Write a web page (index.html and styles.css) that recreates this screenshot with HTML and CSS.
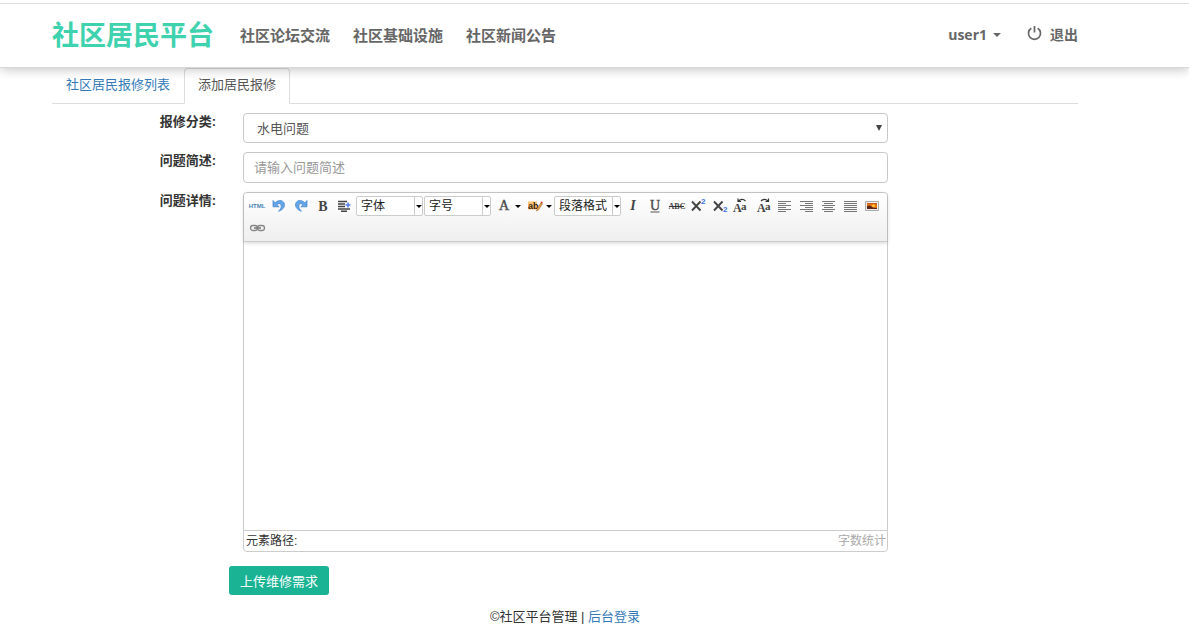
FILE: index.html
```html
<!DOCTYPE html>
<html lang="zh-CN">
<head>
<meta charset="utf-8">
<title>社区居民平台</title>
<link rel="stylesheet" href="styles.css">
</head>
<body>
<header class="navbar">
  <div class="container navbar-inner">
    <a class="brand" href="#">社区居民平台</a>
    <nav class="nav-links">
      <a href="#">社区论坛交流</a>
      <a href="#">社区基础设施</a>
      <a href="#">社区新闻公告</a>
    </nav>
    <nav class="nav-user">
      <a href="#">user1<span class="caret"></span></a>
      <a href="#" class="logout"><svg class="power" viewBox="0 0 15 16"><path d="M4.300 3.200A6 6 0 1 0 10.700 3.200M7.500 1v6.500" fill="none" stroke="currentColor" stroke-width="1.700"/></svg>退出</a>
    </nav>
  </div>
</header>
<main class="container">
  <nav class="tabs">
    <a class="tab" href="#">社区居民报修列表</a>
    <a class="tab active" href="#">添加居民报修</a>
  </nav>
  <form>
    <div class="form-row">
      <label for="category">报修分类:</label>
      <div class="select-box"><select id="category" class="control"><option>水电问题</option></select></div>
    </div>
    <div class="form-row">
      <label for="summary">问题简述:</label>
      <input id="summary" class="control text-control" type="text" placeholder="请输入问题简述">
    </div>
    <div class="form-row">
      <label for="detail">问题详情:</label>
      <div class="editor">
        <div class="toolbar">
          <button type="button" class="tool" aria-label="源代码"><svg class="icon" viewBox="0 0 18 16"><text x="9" y="10" text-anchor="middle" class="t-html">HTML</text></svg></button>
          <button type="button" class="tool" aria-label="撤销"><svg class="icon" viewBox="0 0 18 16"><path d="M3 2.500v6.300h6.200L7 6.700C8.600 5 11.200 5.300 11.200 8c0 2-.9 3.500-2.700 5.300 4-1.300 6-3.600 6-6.500C14.500 2.500 9 .7 5.200 4.800z" fill="#63a5e6" stroke="#3d83cb" stroke-width=".7"/></svg></button>
          <button type="button" class="tool" aria-label="重做"><svg class="icon" viewBox="0 0 18 16"><path d="M15 2.500v6.300H8.800L11 6.700C9.400 5 6.800 5.300 6.800 8c0 2 .9 3.500 2.700 5.300-4-1.300-6-3.600-6-6.500C3.500 2.500 9 .7 12.800 4.800z" fill="#63a5e6" stroke="#3d83cb" stroke-width=".7"/></svg></button>
          <button type="button" class="tool" aria-label="加粗"><svg class="icon" viewBox="0 0 18 16"><text x="9" y="13" text-anchor="middle" class="t-serif t-bold">B</text></svg></button>
          <button type="button" class="tool" aria-label="首行缩进"><svg class="icon" viewBox="0 0 18 16"><path d="M2 3.500h9M2 6h7M2 8.500h7M2 11h12M5 13.200h6" stroke="#444" stroke-width="1.500"/><path d="M9.500 7h5M12 4.500v5" stroke="#5582ee" stroke-width="1.600"/></svg></button>
          <span class="combo"><select aria-label="字体"><option>字体</option></select></span>
          <span class="combo"><select aria-label="字号"><option>字号</option></select></span>
          <button type="button" class="tool split" aria-label="字体颜色"><svg class="icon" viewBox="0 0 18 16"><text x="9" y="12" text-anchor="middle" class="t-serif t-color">A</text></svg></button>
          <button type="button" class="tool split" aria-label="背景色"><svg class="icon" viewBox="0 0 18 16"><path d="M2 3.500h9v8H2z" fill="#ffc477"/><text x="2" y="11" class="t-ab">ab</text><path d="M10.500 13l.8-2.500 3.500-5.500 1.500 1-3.500 5.500z" fill="#efa33c" stroke="#996238" stroke-width=".6"/><path d="M14.500 4.500l1.800 1.300.7-1-1.800-1.500z" fill="#dc4235"/></svg></button>
          <span class="combo"><select aria-label="段落格式"><option>段落格式</option></select></span>
          <button type="button" class="tool" aria-label="斜体"><svg class="icon" viewBox="0 0 18 16"><text x="9" y="12" text-anchor="middle" class="t-serif t-bold t-italic">I</text></svg></button>
          <button type="button" class="tool" aria-label="下划线"><svg class="icon" viewBox="0 0 18 16"><text x="9" y="12" text-anchor="middle" class="t-serif t-under">U</text><path d="M4.500 14h9" stroke="#555"/></svg></button>
          <button type="button" class="tool" aria-label="删除线"><svg class="icon" viewBox="0 0 18 16"><text x="9" y="11" text-anchor="middle" class="t-strike">ABC</text><path d="M1 8.500h15" stroke="#333"/></svg></button>
          <button type="button" class="tool" aria-label="上标"><svg class="icon" viewBox="0 0 18 16"><path d="M2 3.500l8.500 9M10.500 3.500L2 12.500" stroke="#444" stroke-width="1.900"/><text x="11" y="6" class="t-script">2</text></svg></button>
          <button type="button" class="tool" aria-label="下标"><svg class="icon" viewBox="0 0 18 16"><path d="M2 3.500l8.500 9M10.500 3.500L2 12.500" stroke="#444" stroke-width="1.900"/><text x="11" y="14" class="t-script">2</text></svg></button>
          <button type="button" class="tool narrow" aria-label="转大写"><svg class="icon" viewBox="0 0 18 16"><text x="-1" y="14" class="t-case">A</text><text x="7" y="12" class="t-small">a</text><path d="M4 3.500Q8-.5 11.500 3M4 .5v3h3" fill="none" stroke="#333" stroke-width="1.200"/></svg></button>
          <button type="button" class="tool narrow" aria-label="转小写"><svg class="icon" viewBox="0 0 18 16"><text x="2" y="14" class="t-case">A</text><text x="10" y="12" class="t-small">a</text><path d="M6 3Q10-.5 13.500 3.500M13.500 .5v3h-3" fill="none" stroke="#333" stroke-width="1.200"/></svg></button>
          <button type="button" class="tool" aria-label="左对齐"><svg class="icon" viewBox="0 0 18 16"><path d="M2 3.500h13M2 5.500h8M2 7.500h13M2 9.500h8M2 11.500h13M2 13.500h8" stroke="#777"/></svg></button>
          <button type="button" class="tool" aria-label="右对齐"><svg class="icon" viewBox="0 0 18 16"><path d="M2 3.500h13M7 5.500h8M2 7.500h13M7 9.500h8M2 11.500h13M7 13.500h8" stroke="#777"/></svg></button>
          <button type="button" class="tool" aria-label="居中"><svg class="icon" viewBox="0 0 18 16"><path d="M2 3.500h13M4 5.500h9M2 7.500h13M4 9.500h9M2 11.500h13M4 13.500h9" stroke="#777"/></svg></button>
          <button type="button" class="tool" aria-label="两端对齐"><svg class="icon" viewBox="0 0 18 16"><path d="M2 3.500h13M2 5.500h13M2 7.500h13M2 9.500h13M2 11.500h13M2 13.500h13" stroke="#777"/></svg></button>
          <button type="button" class="tool" aria-label="图片"><svg class="icon" viewBox="0 0 18 16"><path d="M1.500 3.500h13v9h-13z" fill="#eee" stroke="#aaa"/><path d="M3 5h10v6H3z" fill="#e9780c"/><path d="M3 5h10v1.500L3 6z" fill="#c85a10"/><path d="M3 8l3-.5 3 2 4 .5v1H3z" fill="#5a2417"/><circle cx="9.500" cy="7.700" r="1.500" fill="#ffc33c"/></svg></button>
          <button type="button" class="tool" aria-label="超链接"><svg class="icon" viewBox="0 0 18 16"><rect x="2.500" y="5.500" width="7" height="5" rx="2.500" fill="none" stroke="#888" stroke-width="1.300"/><rect x="9.500" y="5.500" width="7" height="5" rx="2.500" fill="none" stroke="#888" stroke-width="1.300"/><path d="M6 8h7" stroke="#777" stroke-width="1.500"/></svg></button>
        </div>
        <textarea id="detail" class="editor-body"></textarea>
        <div class="status"><span>元素路径:</span><span class="count">字数统计</span></div>
      </div>
    </div>
    <div class="actions"><button type="submit" class="submit">上传维修需求</button></div>
  </form>
  <footer>©社区平台管理 | <a href="#">后台登录</a></footer>
</main>
</body>
</html>
```
FILE: styles.css
```css
* { box-sizing: border-box; }
body {
  margin: 0;
  padding-top: 3px;
  background: #fff;
  color: #333;
  font: 13px/18px "Liberation Sans", "Noto Sans CJK SC", sans-serif;
}
a { color: #337ab7; text-decoration: none; }
button, input, select, textarea { font-family: inherit; margin: 0; }
.container { margin: 0 111px 0 52px; }

.navbar {
  position: relative;
  z-index: 1;
  border-top: 1px solid #ddd;
  border-bottom: 1px solid #d8d8d8;
  box-shadow: 0 2px 10px rgba(0, 0, 0, .22);
  clip-path: inset(0 0 -14px 0);
  font-family: "Open Sans", "Noto Sans CJK SC", sans-serif;
}
.navbar-inner { display: flex; align-items: center; height: 63px; padding-bottom: 2px; }
.navbar a { color: #666; font-size: 15px; font-weight: 700; white-space: nowrap; }
.navbar .brand { color: #3fd2ae; font-size: 27px; line-height: 36px; }
.nav-links { display: flex; gap: 23px; margin-left: 26px; }
.nav-user { display: flex; align-items: center; gap: 26px; margin-left: auto; }
.navbar .nav-user a { display: flex; align-items: center; font-size: 14px; }
.caret {
  margin-left: 6px;
  border: 4px solid transparent;
  border-top-color: #666;
  border-bottom: 0;
}
.power { width: 15px; height: 16px; margin: 0 8px 4px 0; }

.tabs { display: flex; height: 36px; border-bottom: 1px solid #ddd; margin-bottom: 9px; }
.tab {
  height: 36px;
  padding: 7px 13px;
  border: 1px solid transparent;
  border-radius: 4px 4px 0 0;
}
.tab.active { color: #555; background: #fff; border-color: #ddd #ddd #fff; }

.form-row {
  display: grid;
  grid-template-columns: 164fr 645fr 163fr;
  column-gap: 27px;
  align-items: start;
  margin-bottom: 9px;
}
.form-row label { text-align: right; font-weight: 700; line-height: 17px; }
.control {
  display: block;
  width: 100%;
  height: 30px;
  border: 1px solid #c8c8c8;
  border-radius: 4px;
  background: #fff;
  color: #555;
  font-size: 13px;
  padding: 0 13px;
  appearance: none;
}
.text-control { height: 31px; padding: 0 10px; }
.control::placeholder { color: #999; }
.select-box { position: relative; }
.select-box::after {
  content: "";
  position: absolute;
  right: 6px;
  top: 12px;
  border: 3px solid transparent;
  border-top: 6px solid #444;
  border-bottom: 0;
  pointer-events: none;
}

.editor { border: 1px solid #ccc; border-radius: 4px; font-size: 12px; }
.toolbar {
  display: flex;
  flex-wrap: wrap;
  padding: 2px 0 2px 2px;
  border-bottom: 1px solid #ccc;
  border-radius: 4px 4px 0 0;
  background: linear-gradient(#fff, #efefef);
  box-shadow: 0 1px 4px rgba(0, 0, 0, .18);
}
.tool {
  display: flex;
  align-items: center;
  justify-content: center;
  width: 22px;
  height: 22px;
  padding: 0;
  border: 0;
  background: none;
}
.tool.narrow { width: 21px; }
.tool.split { width: 31px; }
.tool.split::after {
  content: "";
  margin-left: 2px;
  border: 3px solid transparent;
  border-top-color: #000;
  border-bottom: 0;
}
.icon { width: 18px; height: 16px; flex: none; overflow: visible; }
.icon text { fill: #444; }
.icon .t-html { font: 700 6px "Liberation Sans", sans-serif; fill: #4784b5; }
.icon .t-serif { font: 14px "Liberation Serif", serif; }
.icon .t-bold { font-weight: 700; }
.icon .t-italic { font-style: italic; }
.icon .t-color, .icon .t-under { stroke: #555; stroke-width: .4px; }
.icon .t-ab { font: 700 9px "Liberation Sans", sans-serif; fill: #332211; }
.icon .t-strike { font: 700 8px "Liberation Serif", serif; }
.icon .t-script { font: 700 8px "Liberation Sans", sans-serif; fill: #3b72e8; }
.icon .t-case { font: 700 12px "Liberation Serif", serif; }
.icon .t-small { font: 700 11px "Liberation Serif", serif; }
.combo { position: relative; width: 67px; height: 20px; margin: 1px 1px 0 0; }
.combo select {
  display: block;
  width: 100%;
  height: 20px;
  padding: 0 0 0 4px;
  border: 1px solid #ccc;
  border-radius: 2px;
  background: linear-gradient(#ccc, #ccc) right 7px top / 1px 100% no-repeat #fff;
  color: #222;
  font-size: 12px;
  appearance: none;
}
.combo::after {
  content: "";
  position: absolute;
  right: 1px;
  top: 9px;
  border: 3px solid transparent;
  border-top-color: #000;
  border-bottom: 0;
  pointer-events: none;
}
.editor-body {
  display: block;
  width: 100%;
  height: 288px;
  border: 0;
  outline: 0;
  resize: none;
  background: transparent;
}
.status {
  display: flex;
  justify-content: space-between;
  padding: 1px 1px 1px 2px;
  border-top: 1px solid #ccc;
}
.count { color: #aaa; }

.actions {
  display: grid;
  grid-template-columns: 150fr 849fr;
  column-gap: 27px;
  margin-top: 14px;
}
.submit {
  grid-column: 2;
  justify-self: start;
  height: 29px;
  padding: 0 11px;
  border: 0;
  border-radius: 3px;
  background: #1ab394;
  color: #fff;
  font-size: 13px;
}
footer { margin-top: 13px; text-align: center; }
```
